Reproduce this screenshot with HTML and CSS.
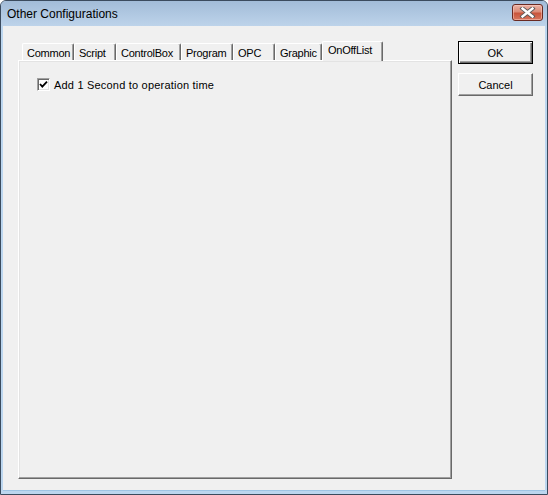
FILE: index.html
```html
<!DOCTYPE html>
<html>
<head>
<meta charset="utf-8">
<link rel="stylesheet" href="styles.css">
</head>
<body>
<div class="window">
  <div class="titlebar">
    <span class="title">Other Configurations</span>
    <div class="close">
      <svg width="17" height="11" viewBox="0 0 17 11">
        <path d="M3.5 1.5 L13.5 9.5 M13.5 1.5 L3.5 9.5" stroke="#5a5a5a" stroke-width="4.2" stroke-linecap="square" fill="none"/>
        <path d="M3.5 1.5 L13.5 9.5 M13.5 1.5 L3.5 9.5" stroke="#ffffff" stroke-width="2.4" stroke-linecap="square" fill="none"/>
      </svg>
    </div>
  </div>
  <div class="client">
    <div class="tabarea">
      <div class="tabs">
        <div class="tab w-common">Common</div>
        <div class="tab w-script">Script</div>
        <div class="tab w-control">ControlBox</div>
        <div class="tab w-program">Program</div>
        <div class="tab w-opc">OPC</div>
        <div class="tab w-graphic">Graphic</div>
        <div class="tab selected w-onoff">OnOffList</div>
      </div>
      <div class="panel">
        <label class="check">
          <span class="box">
            <svg width="9" height="9" viewBox="0 0 9 9">
              <path d="M1 4 L3.3 6.6 L8 1.6" stroke="#000" stroke-width="1.8" fill="none"/>
            </svg>
          </span>
          <span class="check-label">Add 1 Second to operation time</span>
        </label>
      </div>
    </div>
    <div class="buttons">
      <button class="btn default">OK</button>
      <button class="btn">Cancel</button>
    </div>
  </div>
</div>
</body>
</html>
```

FILE: styles.css
```css
html, body {
  margin: 0;
  padding: 0;
  background: #ffffff;
}

.window {
  width: 548px;
  height: 495px;
  box-sizing: border-box;
  border: 1px solid #3b4b5e;
  border-radius: 6px 6px 0 0;
  background: #bcd6ef;
  display: flex;
  flex-direction: column;
  padding: 0 2px 3px 2px;
  overflow: hidden;
}

.titlebar {
  height: 25px;
  flex: none;
  margin: 0 -2px;
  padding: 0 4px 0 6px;
  background: linear-gradient(#a2bcd8, #bdd3ea);
  display: flex;
  align-items: flex-start;
  justify-content: space-between;
}

.title {
  font-family: "Liberation Sans", Arial, sans-serif;
  font-size: 12px;
  color: #000;
  margin-top: 6px;
  line-height: 15px;
}

.close {
  width: 31px;
  height: 17px;
  margin-top: 3px;
  box-sizing: border-box;
  border: 1px solid #6a2a22;
  border-radius: 3px;
  background: linear-gradient(#eab3a6 0%, #dc8b77 45%, #c9553c 55%, #d7765e 100%);
  box-shadow: inset 0 0 0 1px rgba(255, 210, 200, 0.5);
  display: flex;
  align-items: center;
  justify-content: center;
}

.close svg {
  display: block;
}

.client {
  flex: 1;
  background: #f0f0f0;
  display: flex;
  align-items: flex-start;
  padding: 15px 12px 0 15px;
  border-bottom: 1px solid #9fc4e4;
}

.tabarea {
  width: 434px;
  display: flex;
  flex-direction: column;
}

.tabs {
  height: 19px;
  display: flex;
  align-items: flex-start;
  padding-left: 4px;
  position: relative;
  z-index: 1;
}

.tab {
  box-sizing: border-box;
  height: 17px;
  margin-top: 2px;
  border-top: 1px solid #ffffff;
  border-left: 1px solid #ffffff;
  border-right: 1px solid #696969;
  border-radius: 2px 2px 0 0;
  box-shadow: inset -1px 0 #a0a0a0;
  padding-left: 4px;
  font-family: "Liberation Sans", Arial, sans-serif;
  font-size: 11px;
  letter-spacing: -0.25px;
  line-height: 15px;
  padding-top: 2px;
  color: #000;
  white-space: nowrap;
  background: #f0f0f0;
}

.tab.selected {
  height: 20px;
  margin-top: 0;
  padding-left: 5px;
  padding-top: 1px;
}

.w-common { width: 52px; }
.w-script { width: 42px; }
.w-control { width: 65px; }
.w-program { width: 52px; }
.w-opc { width: 42px; }
.w-graphic { width: 47px; }
.w-onoff { width: 61px; }

.panel {
  height: 419px;
  box-sizing: border-box;
  border-top: 1px solid #ffffff;
  border-left: 1px solid #ffffff;
  border-right: 1px solid #696969;
  border-bottom: 1px solid #696969;
  box-shadow: inset -1px -1px #a0a0a0, inset 1px 1px #e3e3e3;
  padding: 17px 0 0 18px;
}

.check {
  display: flex;
  align-items: center;
  font-family: "Liberation Sans", Arial, sans-serif;
  font-size: 11px;
  color: #000;
}

.box {
  width: 13px;
  height: 13px;
  box-sizing: border-box;
  border-top: 1px solid #a0a0a0;
  border-left: 1px solid #a0a0a0;
  border-right: 1px solid #ffffff;
  border-bottom: 1px solid #ffffff;
  box-shadow: inset 1px 1px #696969, inset -1px -1px #e3e3e3;
  background: #ffffff;
  display: flex;
  align-items: center;
  justify-content: center;
  margin-right: 4px;
}

.box svg {
  display: block;
}

.check-label {
  letter-spacing: 0.2px;
}

.buttons {
  display: flex;
  flex-direction: column;
  gap: 9px;
  margin-left: 6px;
}

.btn {
  width: 75px;
  height: 23px;
  box-sizing: border-box;
  margin: 0;
  padding: 0;
  background: #f0f0f0;
  border-top: 1px solid #ffffff;
  border-left: 1px solid #ffffff;
  border-right: 1px solid #696969;
  border-bottom: 1px solid #696969;
  box-shadow: inset -1px -1px #a0a0a0;
  font-family: "Liberation Sans", Arial, sans-serif;
  font-size: 11px;
  color: #000;
}

.btn.default {
  border: 1px solid #000;
  box-shadow: inset 1px 1px #ffffff, inset -1px -1px #696969, inset -2px -2px #a0a0a0;
}
```
